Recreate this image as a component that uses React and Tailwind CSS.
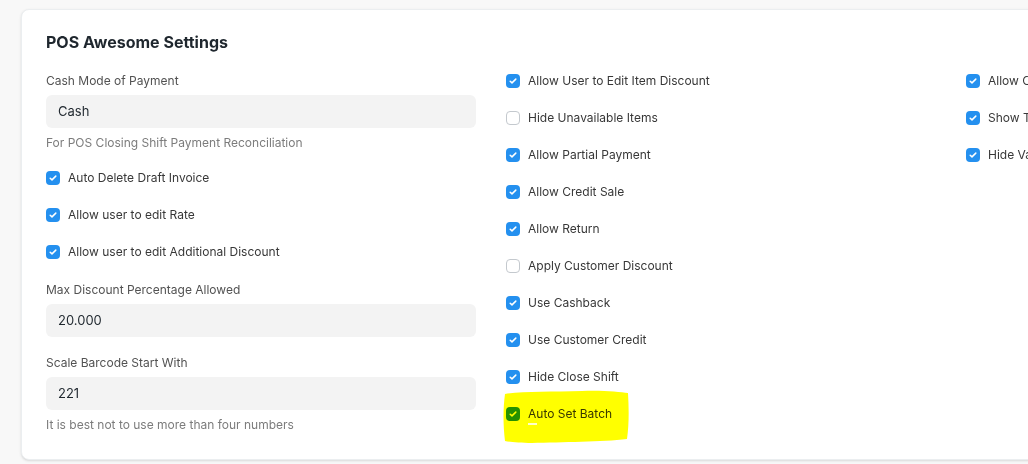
import React from "react";

const col2 = [
  ["Allow User to Edit Item Discount", true],
  ["Hide Unavailable Items", false],
  ["Allow Partial Payment", true],
  ["Allow Credit Sale", true],
  ["Allow Return", true],
  ["Apply Customer Discount", false],
  ["Use Cashback", true],
  ["Use Customer Credit", true],
  ["Hide Close Shift", true],
  ["Auto Set Batch", true],
];

const col3 = [
  ["Allow Change Posting Date", true],
  ["Show Template Items", true],
  ["Hide Variants Items", true],
];

const Check = ({ label, checked, className = "" }) => (
  <div className={`flex items-center h-5 gap-2 ${className}`}>
    {checked ? (
      <span className="w-[14px] h-[14px] rounded-[4px] bg-[#2490ef] flex items-center justify-center shrink-0">
        <svg width="10" height="10" viewBox="0 0 10 10" fill="none">
          <path
            d="M2.2 5.2l1.8 1.7 3.8-3.8"
            stroke="white"
            strokeWidth="1.5"
            strokeLinecap="round"
            strokeLinejoin="round"
          />
        </svg>
      </span>
    ) : (
      <span className="w-[14px] h-[14px] rounded-[4px] bg-white border border-[#c4c9ce] shrink-0" />
    )}
    <span className="text-[12px] text-[#383838] whitespace-nowrap">{label}</span>
  </div>
);

const Field = ({ label, value, className = "" }) => (
  <div className={className}>
    <div className="h-5 text-[12px] leading-5 text-[#525252]">{label}</div>
    <div className="mt-[4px] h-[33px] rounded-md bg-[#f3f3f3] px-3 flex items-center text-[13px] text-[#1f272e]">
      {value}
    </div>
  </div>
);

export default function App() {
  return (
    <div
      className="h-[464px] w-[1028px] overflow-hidden bg-[#f8f8f8] pl-[21px] pt-[9px]"
      style={{ fontFamily: "Inter, 'Noto Sans', sans-serif" }}
    >
      <div className="relative w-[1100px] h-[451px] rounded-lg bg-white border border-[#ebeef0] shadow-sm pl-[24px] pt-[20px]">
        <h2 className="text-base leading-6 font-bold text-[#1f272e]">POS Awesome Settings</h2>

        <div className="grid grid-cols-[430px_430px_430px] gap-x-[30px] mt-[17px]">
          <div className="flex flex-col">
            <Field label="Cash Mode of Payment" value="Cash" />
            <div className="mt-[6px] h-[18px] text-[12px] leading-[18px] text-[#7c7c7c]">
              For POS Closing Shift Payment Reconciliation
            </div>
            <Check className="mt-[16px]" label="Auto Delete Draft Invoice" checked />
            <Check className="mt-[17px]" label="Allow user to edit Rate" checked />
            <Check className="mt-[17px]" label="Allow user to edit Additional Discount" checked />
            <Field className="mt-[18px]" label="Max Discount Percentage Allowed" value="20.000" />
            <Field className="mt-[16px]" label="Scale Barcode Start With" value="221" />
            <div className="mt-[6px] h-[18px] text-[12px] leading-[18px] text-[#7c7c7c]">
              It is best not to use more than four numbers
            </div>
          </div>

          <div className="flex flex-col gap-[17px]">
            {col2.map(([label, checked]) => (
              <Check key={label} label={label} checked={checked} />
            ))}
          </div>

          <div className="flex flex-col gap-[17px]">
            {col3.map(([label, checked]) => (
              <Check key={label} label={label} checked={checked} />
            ))}
          </div>
        </div>

        {/* highlighter mark over Auto Set Batch */}
        <svg
          className="absolute left-[480px] top-[380px] mix-blend-multiply pointer-events-none"
          width="128"
          height="56"
          viewBox="0 0 128 56"
        >
          <path
            d="M3 4 C20 1 50 2 80 1 C100 0 118 2 126 3 C127 20 127 35 125 49 C100 52 60 52 30 53 C18 53 8 52 3 51 C1 35 1 18 3 4 Z"
            fill="#ffff00"
          />
        </svg>
        <span className="absolute left-[506px] top-[413px] w-[9px] h-[1.5px] bg-white/80" />
      </div>
    </div>
  );
}
